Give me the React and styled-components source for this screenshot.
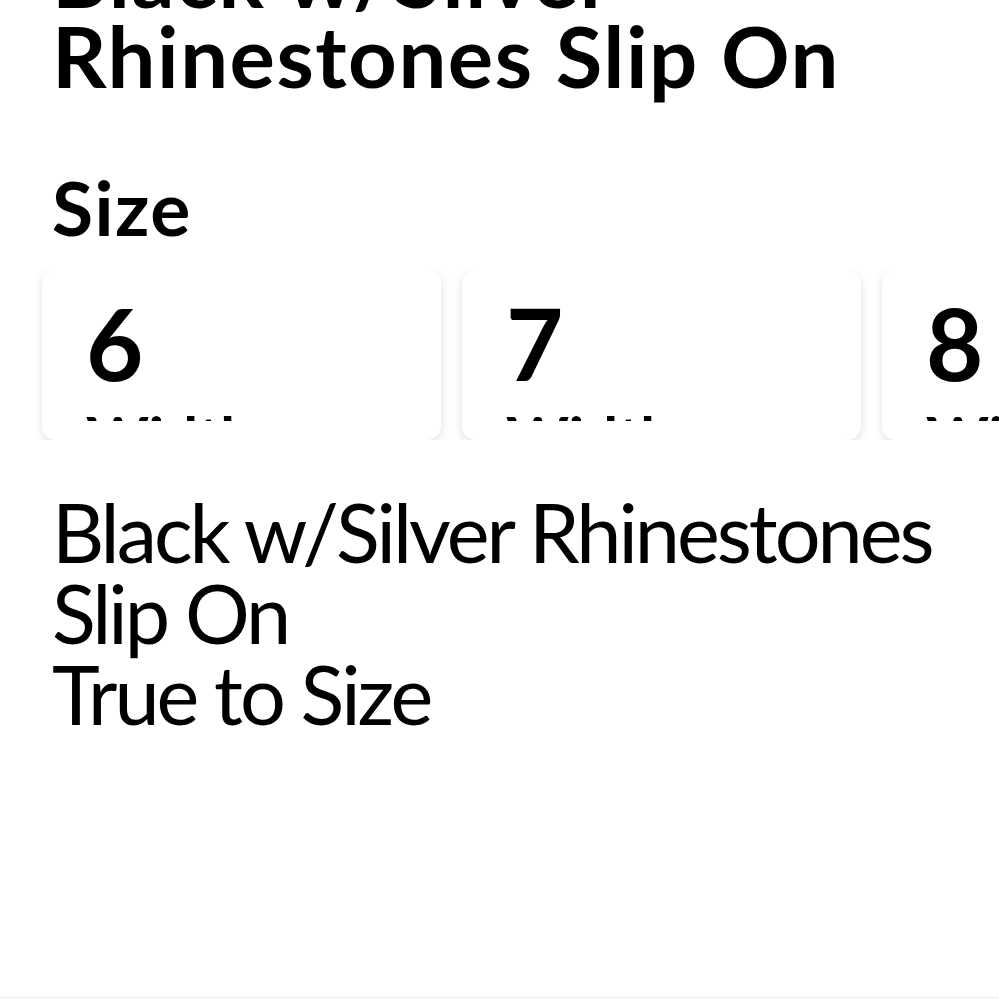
import React from 'react';
import styled, { createGlobalStyle } from 'styled-components';

const GlobalStyle = createGlobalStyle`
  html, body {
    margin: 0;
    padding: 0;
    background: #fff;
    overflow: hidden;
  }
  body {
    font-family: Lato, "Open Sans", sans-serif;
    color: #000;
  }
`;

const Screen = styled.div`
  height: 997px;
  border-bottom: 1px solid #ececec;
  overflow: hidden;
  background: #fff;
`;

const Title = styled.h1`
  margin: -65px 0 0 52px;
  font-size: 85px;
  line-height: 80px;
  font-weight: 700;
  letter-spacing: 1.5px;
`;

const SectionLabel = styled.h2`
  margin: 75px 0 0 52px;
  font-size: 75px;
  line-height: 75px;
  font-weight: 700;
  letter-spacing: 1.5px;
`;

const SizeRail = styled.div`
  display: flex;
  gap: 21px;
  margin-top: 25px;
  padding: 0 0 0 42px;
  overflow: hidden;
`;

const SizeCard = styled.div`
  flex: 0 0 399px;
  height: 170px;
  box-sizing: border-box;
  padding: 23px 0 19px 44px;
  background: #fff;
  border-radius: 14px;
  box-shadow: 0 3px 10px rgba(0, 0, 0, 0.13);
`;

const CardClip = styled.div`
  height: 128px;
  overflow: hidden;
`;

const SizeNumber = styled.div`
  font-size: 99px;
  line-height: 99px;
  font-weight: 700;
`;

const SizeWidth = styled.div`
  margin-top: 15px;
  font-size: 60px;
  line-height: 60px;
  font-weight: 700;
`;

const Description = styled.p`
  margin: 51px 0 0 52px;
  font-size: 81px;
  line-height: 81px;
  font-weight: 400;
  letter-spacing: -3px;
`;

const sizes = ['6', '7', '8', '9'];

export default function App() {
  return (
    <>
      <GlobalStyle />
      <Screen>
        <Title>
          Black w/Silver
          <br />
          Rhinestones Slip On
        </Title>
        <SectionLabel>Size</SectionLabel>
        <SizeRail>
          {sizes.map((s) => (
            <SizeCard key={s}>
              <CardClip>
                <SizeNumber>{s}</SizeNumber>
                <SizeWidth>Width</SizeWidth>
              </CardClip>
            </SizeCard>
          ))}
        </SizeRail>
        <Description>
          Black w/Silver Rhinestones
          <br />
          Slip On
          <br />
          True to Size
        </Description>
      </Screen>
    </>
  );
}
